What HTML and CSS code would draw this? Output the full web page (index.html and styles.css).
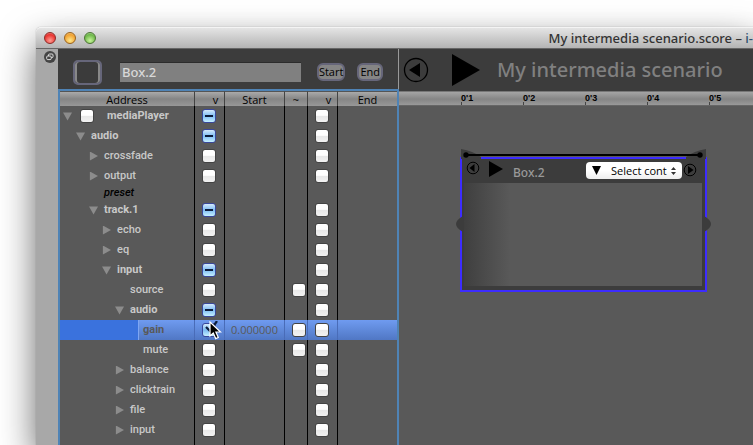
FILE: index.html
```html
<!DOCTYPE html>
<html lang="en">
<head>
<meta charset="utf-8">
<title>My intermedia scenario.score</title>
<link rel="stylesheet" href="styles.css">
</head>
<body>
<main class="window">
  <header class="titlebar">
    <div class="lights">
      <button class="light red" aria-label="Close"></button>
      <button class="light amber" aria-label="Minimize"></button>
      <button class="light green" aria-label="Zoom"></button>
    </div>
    <h1 class="window-title">My intermedia scenario.score – <span class="app">i-</span></h1>
  </header>
  <div class="workspace">
    <aside class="strip">
      <button class="detach" aria-label="Detach panel">
        <svg width="12" height="12" viewBox="0 0 12 12"><circle cx="6" cy="6" r="6" fill="#444"/><g fill="#444" stroke="#ddd" stroke-width="1"><rect x="4.500" y="3" width="4.500" height="3.600" rx="1"/><rect x="2.700" y="5" width="4.500" height="3.600" rx="1"/></g></svg>
      </button>
    </aside>
    <section class="inspector">
      <div class="box-bar">
        <button class="swatch" aria-label="Box color"></button>
        <input class="box-name" type="text" value="Box.2" aria-label="Box name">
        <button class="pill">Start</button>
        <button class="pill">End</button>
      </div>
      <div class="tree-frame">
        <table class="tree">
          <colgroup><col class="c-address"><col class="c-check"><col class="c-value"><col class="c-curve"><col class="c-check"><col></colgroup>
          <thead>
            <tr><th>Address</th><th class="tick-head">v</th><th>Start</th><th>~</th><th class="tick-head">v</th><th>End</th></tr>
          </thead>
          <tbody>
            <tr><td><div class="node d0"><button class="twisty open" aria-label="Collapse"></button><input type="checkbox" aria-label="Record mediaPlayer"><b class="device">mediaPlayer</b></div></td><td><input type="checkbox" class="mixed" checked aria-label="Start mediaPlayer"></td><td></td><td></td><td><input type="checkbox" aria-label="End mediaPlayer"></td><td></td></tr>
            <tr><td><div class="node d1"><button class="twisty open" aria-label="Collapse"></button><b>audio</b></div></td><td><input type="checkbox" class="mixed" checked aria-label="Start audio"></td><td></td><td></td><td><input type="checkbox" aria-label="End audio"></td><td></td></tr>
            <tr><td><div class="node d2"><button class="twisty" aria-label="Expand"></button><span>crossfade</span></div></td><td><input type="checkbox" aria-label="Start crossfade"></td><td></td><td></td><td><input type="checkbox" aria-label="End crossfade"></td><td></td></tr>
            <tr><td><div class="node d2"><button class="twisty" aria-label="Expand"></button><span>output</span></div></td><td><input type="checkbox" aria-label="Start output"></td><td></td><td></td><td><input type="checkbox" aria-label="End output"></td><td></td></tr>
            <tr class="short"><td><div class="node leaf d2"><i>preset</i></div></td><td></td><td></td><td></td><td></td><td></td></tr>
            <tr><td><div class="node d2"><button class="twisty open" aria-label="Collapse"></button><b>track.1</b></div></td><td><input type="checkbox" class="mixed" checked aria-label="Start track.1"></td><td></td><td></td><td><input type="checkbox" aria-label="End track.1"></td><td></td></tr>
            <tr><td><div class="node d3"><button class="twisty" aria-label="Expand"></button><span>echo</span></div></td><td><input type="checkbox" aria-label="Start echo"></td><td></td><td></td><td><input type="checkbox" aria-label="End echo"></td><td></td></tr>
            <tr><td><div class="node d3"><button class="twisty" aria-label="Expand"></button><span>eq</span></div></td><td><input type="checkbox" aria-label="Start eq"></td><td></td><td></td><td><input type="checkbox" aria-label="End eq"></td><td></td></tr>
            <tr><td><div class="node d3"><button class="twisty open" aria-label="Collapse"></button><b>input</b></div></td><td><input type="checkbox" class="mixed" checked aria-label="Start input"></td><td></td><td></td><td><input type="checkbox" aria-label="End input"></td><td></td></tr>
            <tr><td><div class="node leaf d4"><span>source</span></div></td><td><input type="checkbox" aria-label="Start source"></td><td></td><td class="curve"><input type="checkbox" aria-label="Curve source"></td><td><input type="checkbox" aria-label="End source"></td><td></td></tr>
            <tr><td><div class="node d4"><button class="twisty open" aria-label="Collapse"></button><b>audio</b></div></td><td><input type="checkbox" class="mixed" checked aria-label="Start track audio"></td><td></td><td></td><td><input type="checkbox" aria-label="End track audio"></td><td></td></tr>
            <tr class="selected"><td><div class="node leaf d5"><span>gain</span></div></td><td class="pointed"><input type="checkbox" class="ticked" checked aria-label="Start gain">
              <svg class="tick" width="13" height="12" viewBox="0 0 13 12"><path d="M1 6l4 4 7-10" fill="none" stroke="#0d1d3c" stroke-width="2.200"/></svg>
              <svg class="cursor" width="13" height="19" viewBox="0 0 13 19"><path d="M1 1v14l3.300-3 2.400 5.600 2.600-1.100-2.400-5.500h4.600z" fill="#000" stroke="#fff" stroke-width="1.200"/></svg></td><td class="value">0.000000</td><td class="curve"><input type="checkbox" aria-label="Curve gain"></td><td><input type="checkbox" aria-label="End gain"></td><td></td></tr>
            <tr><td><div class="node leaf d5"><span>mute</span></div></td><td><input type="checkbox" aria-label="Start mute"></td><td></td><td class="curve"><input type="checkbox" aria-label="Curve mute"></td><td><input type="checkbox" aria-label="End mute"></td><td></td></tr>
            <tr><td><div class="node d4"><button class="twisty" aria-label="Expand"></button><span>balance</span></div></td><td><input type="checkbox" aria-label="Start balance"></td><td></td><td></td><td><input type="checkbox" aria-label="End balance"></td><td></td></tr>
            <tr><td><div class="node d4"><button class="twisty" aria-label="Expand"></button><span>clicktrain</span></div></td><td><input type="checkbox" aria-label="Start clicktrain"></td><td></td><td></td><td><input type="checkbox" aria-label="End clicktrain"></td><td></td></tr>
            <tr><td><div class="node d4"><button class="twisty" aria-label="Expand"></button><span>file</span></div></td><td><input type="checkbox" aria-label="Start file"></td><td></td><td></td><td><input type="checkbox" aria-label="End file"></td><td></td></tr>
            <tr><td><div class="node d4"><button class="twisty" aria-label="Expand"></button><span>input</span></div></td><td><input type="checkbox" aria-label="Start audio input"></td><td></td><td></td><td><input type="checkbox" aria-label="End audio input"></td><td></td></tr>
            <tr class="short"><td></td><td></td><td></td><td></td><td></td><td></td></tr>
          </tbody>
        </table>
      </div>
    </section>
    <section class="score">
      <div class="transport">
        <button class="plain" aria-label="Rewind"><svg width="26" height="26" viewBox="0 0 26 26"><circle cx="13" cy="13" r="11.500" fill="none" stroke="#000" stroke-width="1.300"/><path d="M6 13l11-7v14z"/></svg></button>
        <button class="plain" aria-label="Play"><svg width="28" height="32" viewBox="0 0 28 32"><path d="M0 0l28 16L0 32z"/></svg></button>
        <h2 class="score-name">My intermedia scenario</h2>
      </div>
      <div class="ruler"><span>0'1</span><span>0'2</span><span>0'3</span><span>0'4</span><span>0'5</span></div>
      <div class="canvas">
        <article class="box">
          <svg class="box-rail" width="251" height="12" viewBox="0 0 251 12"><path d="M2 0q12 2 20 8v2H2zM247 0q-12 2-20 8v2h20z" fill="#3c3c3c"/><path d="M7 6h235" stroke="#000" stroke-width="2"/><circle cx="7" cy="6" r="2.700"/><circle cx="241" cy="6" r="2.700"/></svg>
          <svg class="grip left" width="7" height="16" viewBox="0 0 7 16"><path d="M7 0Q0 4 0 8t7 8z" fill="#3c3c3c"/></svg>
          <svg class="grip right" width="7" height="16" viewBox="0 0 7 16"><path d="M0 0q7 4 7 8t-7 8z" fill="#3c3c3c"/></svg>
          <header class="box-head">
            <button class="plain" aria-label="Box start"><svg width="14" height="14" viewBox="0 0 14 14"><circle cx="7" cy="7" r="5.800" fill="none" stroke="#000"/><path d="M3.500 7l5-4v8z"/></svg></button>
            <button class="plain" aria-label="Play box"><svg width="14" height="16" viewBox="0 0 14 16"><path d="M0 0l14 8-14 8z"/></svg></button>
            <h3 class="box-title">Box.2</h3>
            <label class="picker">
              <svg class="picker-mark" width="9" height="9" viewBox="0 0 9 9"><path d="M0 0h9L4.500 9z"/></svg>
              <select aria-label="Box content"><option>Select cont</option></select>
              <svg class="picker-arrows" width="5" height="8" viewBox="0 0 5 8"><path d="M0 3l2.500-3L5 3zM0 5h5L2.500 8z" fill="#333"/></svg>
            </label>
            <button class="plain box-end" aria-label="Box end"><svg width="14" height="14" viewBox="0 0 14 14"><circle cx="7" cy="7" r="5.800" fill="none" stroke="#000"/><path d="M5 3l5.500 4L5 11z"/></svg></button>
          </header>
          <div class="box-body"></div>
        </article>
      </div>
    </section>
  </div>
</main>
</body>
</html>
```
FILE: styles.css
```css
* { box-sizing: border-box; }
html, body { height: 100%; }
body {
  margin: 0;
  padding: 27px 0 0 36px;
  overflow: hidden;
  background: #fff;
  font-family: "Open Sans", "Noto Sans", sans-serif;
  font-size: 11px;
  font-weight: 500;
}
button, input, select { font: inherit; margin: 0; padding: 0; border: 0; }
h1, h2, h3 { margin: 0; font-family: "Noto Sans", sans-serif; font-weight: 500; white-space: nowrap; }
b { font-weight: 700; }
svg { display: block; }

.window {
  display: flex;
  flex-direction: column;
  height: 100%;
  border-radius: 5px 0 0 0;
  box-shadow: 0 0 1px #777, 30px 16px 36px 0 rgba(0, 0, 0, .1), 0 16px 36px rgba(0, 0, 0, .6);
}
.titlebar {
  display: flex;
  align-items: center;
  height: 22px;
  padding-left: 8px;
  border-top: 1px solid #f4f4f4;
  border-bottom: 1px solid #666;
  border-radius: 5px 0 0 0;
  background: linear-gradient(#e4e4e4, #b4b4b4);
}
.lights { display: flex; gap: 8px; }
.light {
  width: 12px;
  height: 12px;
  border: 1px solid #555;
  border-radius: 50%;
}
.red { border-color: #8c2a26; background: radial-gradient(circle at 50% 75%, #ff9d93, #e8322e 65%, #f6b0ab); }
.amber { border-color: #99621c; background: radial-gradient(circle at 50% 75%, #ffe88a, #f0a030 65%, #f8dca8); }
.green { border-color: #4c7433; background: radial-gradient(circle at 50% 75%, #c8f59b, #6cb648 65%, #cfe8bf); }
.window-title { margin-left: auto; color: #333; font-size: 13px; line-height: 20px; }
.app { color: #2f4f6f; }

.workspace { display: flex; flex: 1; min-height: 0; background: #595959; }
.strip { width: 22px; padding: 2px 2px 0 8px; background: #a8a8a8; }
.detach { display: block; border-radius: 50%; background: none; }

.inspector { display: flex; flex-direction: column; width: 341px; background: #3c3c3c; }
.box-bar {
  display: flex;
  align-items: center;
  height: 40px;
  padding: 6px 15px 0 15px;
  border-right: 1px solid #999;
}
.swatch {
  width: 29px;
  height: 25px;
  border: 2px solid #66667a;
  border-radius: 5px;
  background: #3b3b3b;
  box-shadow: inset 2px 0 #888, inset -2px 0 #888;
}
.box-name {
  flex: 1;
  min-width: 0;
  height: 20px;
  margin: 0 16px 0 18px;
  padding: 0 2px 2px;
  border-top: 1px solid #2c2c2c;
  background: #808080;
  color: #d8d8d8;
  font-family: "Noto Sans", sans-serif;
  font-size: 13px;
}
.pill {
  height: 18px;
  border: 2px solid #66667a;
  border-radius: 6px;
  background: #858585;
  color: #000;
  line-height: 14px;
}
.pill + .pill { margin-left: 12px; padding: 0 1px; }

.tree-frame {
  flex: 1;
  min-height: 0;
  overflow: hidden;
  border: solid #4f83b5;
  border-width: 2px 2px 0 2px;
  background: #595959;
}
.tree { width: 100%; border-collapse: separate; border-spacing: 0; table-layout: fixed; color: #c8c8c8; }
.c-address { width: 135px; }
.c-check { width: 30px; }
.c-value { width: 60px; }
.c-curve { width: 23px; }
.tree th {
  height: 15px;
  padding: 0;
  border-right: 1px solid #444;
  border-top: 1px solid #555;
  background: linear-gradient(#aaa, #858585 50%, #989898);
  color: #000;
  font-weight: 500;
  line-height: 13px;
}
.tree .tick-head { padding-left: 12px; }
.tree td { height: 20px; padding: 0; border-right: 1px solid #000; text-align: center; line-height: 16px; }
.tree td:last-child, .tree th:last-child { border-right: 0; }
.tree .short td { height: 14px; line-height: 14px; }
.tree .curve { padding-left: 6px; }
.node { display: flex; align-items: center; gap: 6px; padding-left: 3px; font-family: Roboto, sans-serif; }
.leaf { padding-left: 18px; }
.d1 { margin-left: 13px; }
.d2 { margin-left: 26px; }
.d3 { margin-left: 39px; }
.d4 { margin-left: 52px; }
.d5 { margin-left: 65px; }
.node i { color: #000; }
.device { margin-left: 7px; }
.twisty { width: 9px; height: 9px; background: #8c8c8c; clip-path: polygon(10% 0, 100% 50%, 10% 100%); }
.twisty.open { clip-path: polygon(0 10%, 100% 10%, 50% 100%); }
.node input { margin-left: 2px; }

input[type="checkbox"] {
  display: block;
  flex: none;
  appearance: none;
  width: 14px;
  height: 14px;
  border: 1px solid #444;
  border-radius: 3px;
  background: linear-gradient(#fff 45%, #e8e8e8 50%, #f2f2f2);
}
td > input[type="checkbox"] { margin: 0 auto 0 7px; }
.curve > input[type="checkbox"] { margin-left: 1px; }
input[type="checkbox"].mixed {
  border-color: #39479b;
  background: linear-gradient(#0d1d3c, #0d1d3c) center / 8px 2px no-repeat, linear-gradient(#d4e9fb, #7dbcf4 50%, #c4f0ff);
}
input[type="checkbox"].ticked { border-color: #39479b; background: linear-gradient(#d4e9fb, #7dbcf4 50%, #c4f0ff); }

.tree .selected td { border-color: #496cb8; background: linear-gradient(#6f9bf0, #5077c4); color: #595959; }
.tree .selected td:first-child { background: linear-gradient(90deg, #3a72dd 78px, #7ea6f2 78px, #7ea6f2 79px, transparent 79px), linear-gradient(#6f9bf0, #5077c4); }
.selected .node { font-weight: 700; }
.selected .pointed { position: relative; }
.tick { position: absolute; left: 10px; top: 1px; }
.cursor { position: absolute; left: 14px; top: 1px; }

.score { display: flex; flex: 1; flex-direction: column; min-width: 0; }
.plain { flex: none; background: none; }
.transport { display: flex; align-items: center; height: 42px; padding-left: 4px; background: #3c3c3c; }
.plain + .plain { margin-left: 23px; }
.score-name { margin-left: 17px; color: #808080; font-size: 20px; line-height: 40px; }
.ruler {
  display: flex;
  height: 15px;
  padding-left: 62px;
  overflow: hidden;
  border-top: 1px solid #777;
  border-bottom: 1px solid #666;
  background: linear-gradient(#a4a4a4, #858585 55%, #999);
  color: #000;
  font-family: "Liberation Sans", sans-serif;
  font-size: 9px;
  font-weight: 700;
  line-height: 12px;
}
.ruler span { flex: none; width: 62px; background: linear-gradient(#444, #444) 0 100% / 1px 3px no-repeat; }

.canvas { position: relative; flex: 1; }
.box {
  position: absolute;
  left: 61px;
  top: 51px;
  display: flex;
  flex-direction: column;
  width: 247px;
  height: 135px;
  border: 2px solid #3d2cff;
  background: #3c3c3c;
}
.box-rail { position: absolute; left: -3px; top: -10px; }
.grip { position: absolute; top: 57px; }
.grip.left { left: -6px; }
.grip.right { right: -6px; }
.box-head { display: flex; align-items: flex-start; height: 24px; padding: 2px 8px 0 4px; }
.box-head .plain + .plain { margin-left: 9px; }
.box-title { margin-left: 10px; color: #999; font-size: 12px; line-height: 24px; }
.picker {
  display: flex;
  align-items: center;
  height: 17px;
  margin: 1px 1px 0 auto;
  padding: 0 6px;
  border-radius: 4px;
  background: linear-gradient(#fff 50%, #eee);
}
.picker select { width: 60px; margin-left: 10px; appearance: none; background: none; color: #000; line-height: 16px; }
.box-end { margin-top: 2px; }
.box-body {
  flex: 1;
  margin: 0 3px 4px 2px;
  background: linear-gradient(90deg, #3f3f3f, #595959 46px);
}
```
